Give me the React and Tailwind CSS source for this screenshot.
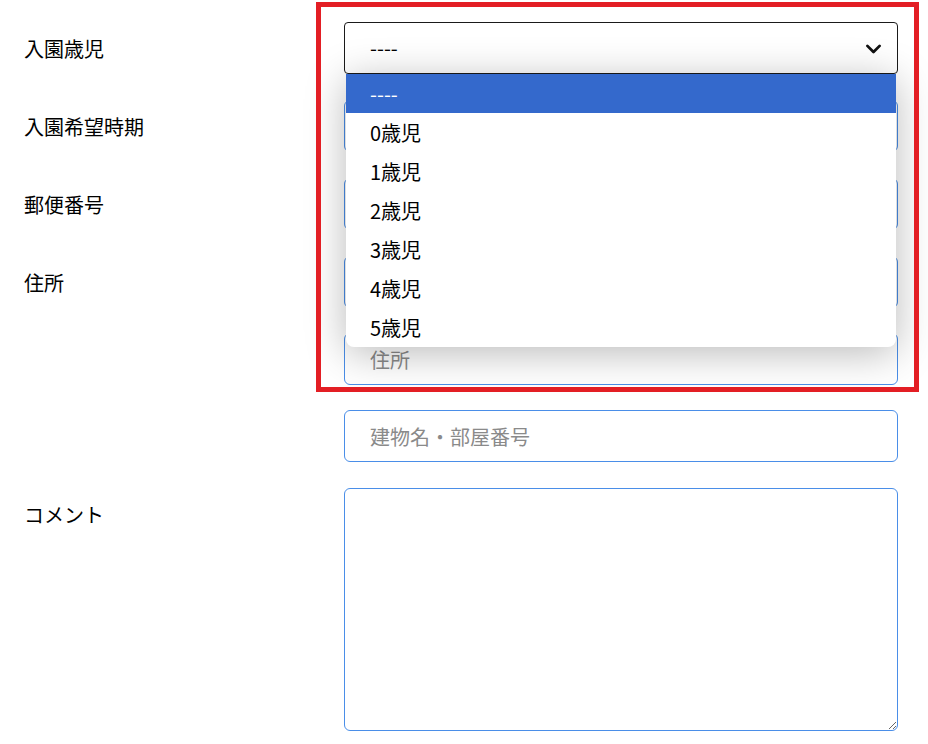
import { useState } from "react"

const ages = ["----", "0歳児", "1歳児", "2歳児", "3歳児", "4歳児", "5歳児"]

function Row({ label, children }) {
    return (
        <div className="flex items-start">
            <div className="w-[320px] shrink-0 pt-[12px] text-[20px] leading-[30px] text-black">{label}</div>
            <div className="w-[554px] flex flex-col gap-[25px]">{children}</div>
        </div>
    )
}

function Field({ placeholder }) {
    return (
        <input
            className="h-[52px] w-full rounded-md border border-[#4a8ee8] bg-transparent px-[25px] text-[20px] text-black placeholder:text-[#8a8a8a] outline-none"
            placeholder={placeholder}
        />
    )
}

export default function App() {
    const [selected] = useState(0)

    return (
        <div
            className="relative h-[744px] w-[928px] overflow-hidden bg-white pl-[24px] pt-[22px]"
            style={{ fontFamily: '"Noto Sans CJK JP", "Noto Sans", sans-serif' }}
        >
            <div className="flex flex-col gap-[26px]">
                <Row label="入園歳児">
                    <div className="relative">
                        <div className="flex h-[52px] w-full items-center justify-between rounded-[4px] border-[1.5px] border-[#1a1a1a] bg-white pl-[25px] pr-[13px] text-[20px] text-black">
                            <span>----</span>
                            <svg width="21" height="21" viewBox="0 0 24 24" fill="none" stroke="#111" strokeWidth="3.2" strokeLinecap="round" strokeLinejoin="round">
                                <path d="M5 9l7 7 7-7" />
                            </svg>
                        </div>
                        <ul className="absolute left-[2px] right-[2px] top-[52px] z-20 overflow-hidden rounded-b-[8px] bg-white text-[20px] shadow-[0_6px_40px_rgba(0,0,0,0.28)]">
                            {ages.map((a, i) => (
                                <li
                                    key={a}
                                    className={
                                        i === selected
                                            ? "flex h-[39px] items-center bg-[#3469cc] pl-[24px] text-white"
                                            : "flex h-[39px] items-center pl-[24px] text-black"
                                    }
                                >
                                    {a}
                                </li>
                            ))}
                        </ul>
                    </div>
                </Row>
                <Row label="入園希望時期">
                    <Field placeholder="" />
                </Row>
                <Row label="郵便番号">
                    <Field placeholder="" />
                </Row>
                <Row label="住所">
                    <Field placeholder="" />
                    <Field placeholder="住所" />
                    <Field placeholder="建物名・部屋番号" />
                </Row>
                <Row label="コメント">
                    <textarea className="h-[243px] w-full rounded-md border border-[#4a8ee8] bg-transparent px-[25px] py-3 text-[20px] outline-none" />
                </Row>
            </div>

            {/* annotation frame */}
            <div className="pointer-events-none absolute left-[316px] top-[2px] z-30 h-[390px] w-[603px] border-[5px] border-[#e31e24]" />
        </div>
    )
}
